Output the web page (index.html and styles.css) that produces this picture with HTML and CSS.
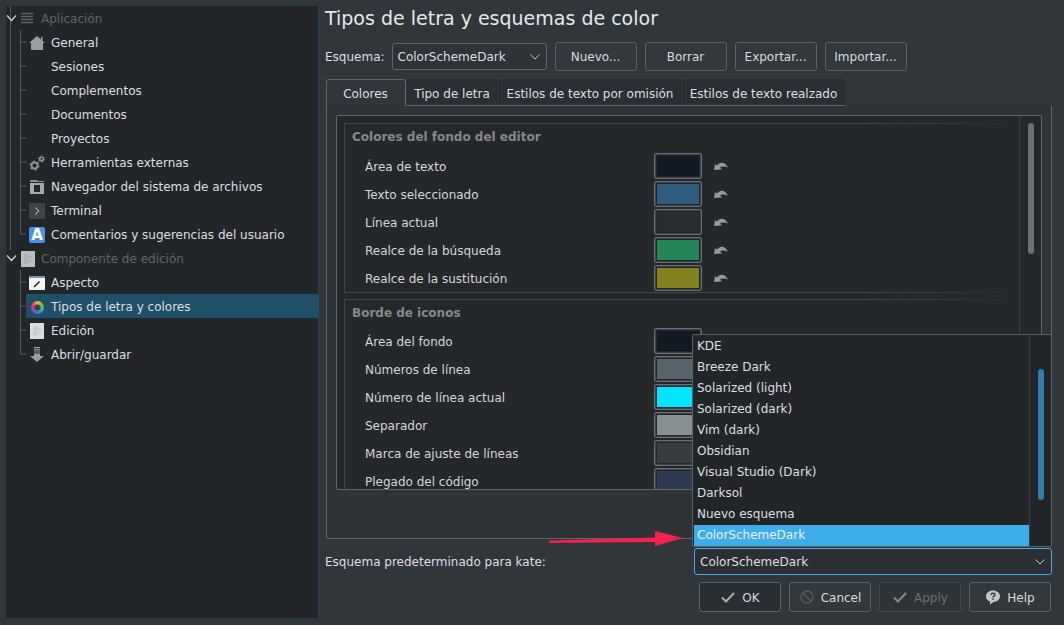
FILE: index.html
```html
<!DOCTYPE html>
<html lang="es-ES">
    <head>
        <meta charset="UTF-8" />
        <meta name="viewport" content="width=device-width, initial-scale=1.0" />
        <title>Tipos de letra y esquemas de color</title>
        <link rel="stylesheet" href="styles.css">
    </head>
    <body>
        <div class="ventana">
            <!-- arbol lateral -->
            <nav class="arbol">
                <svg class="guias" width="40" height="360" viewBox="0 0 40 360">
                    <path d="M4.500 0V244M14.500 24V228H20M14.500 264V348H20M14.500 36H20M14.500 60H20M14.500 84H20M14.500 108H20M14.500 132H20M14.500 156H20M14.500 180H20M14.500 204H20M14.500 276H20M14.500 300H20M14.500 324H20" fill="none" stroke="#54585c"/>
                    <path d="M1 9.500l4.500 5 4.500-5M1 249.500l4.500 5 4.500-5" fill="none" stroke="#d5d7d8" stroke-width="1.200"/>
                </svg>
                <div class="fila seccion">
                    <svg class="iconoSeccion" width="14" height="14" viewBox="0 0 14 14"><path d="M0 1.500H12M0 4.500H12M0 7.500H12M0 10.500H12" stroke="#5d6165" stroke-width="1.500"/></svg>
                    <span>Aplicación</span>
                </div>
                <div class="fila">
                    <svg class="icono" viewBox="0 0 16 16"><path d="M8 1L12 4.500V2H13.500V6L16 8H14V15H2V8H0Z" fill="#9a9ea4"/></svg>
                    <span>General</span>
                </div>
                <div class="fila"><span class="icono"></span><span>Sesiones</span></div>
                <div class="fila"><span class="icono"></span><span>Complementos</span></div>
                <div class="fila"><span class="icono"></span><span>Documentos</span></div>
                <div class="fila"><span class="icono"></span><span>Proyectos</span></div>
                <div class="fila">
                    <svg class="icono" viewBox="0 0 16 16">
                        <circle cx="5.500" cy="10.500" r="3" fill="none" stroke="#8d9195" stroke-width="2"/>
                        <circle cx="5.500" cy="10.500" r="4.300" fill="none" stroke="#8d9195" stroke-width="1.400" stroke-dasharray="2 2.500"/>
                        <circle cx="12.500" cy="4" r="1.800" fill="none" stroke="#8d9195" stroke-width="1.600"/>
                        <circle cx="12.500" cy="4" r="3" fill="none" stroke="#8d9195" stroke-width="1" stroke-dasharray="1.500 1.650"/>
                    </svg>
                    <span>Herramientas externas</span>
                </div>
                <div class="fila">
                    <svg class="icono" viewBox="0 0 16 16"><path d="M1 1H8L9 2H15V3H1Z" fill="#8d9195"/><path d="M1 4H15V15H1ZM5 6V13H11V6Z" fill="#a5a9ad" fill-rule="evenodd"/></svg>
                    <span>Navegador del sistema de archivos</span>
                </div>
                <div class="fila">
                    <svg class="icono" viewBox="0 0 16 16"><rect width="16" height="16" rx="1" fill="#3d4346"/><path d="M6 4.500L10 8L6 11.500" fill="none" stroke="#c6c9cb"/></svg>
                    <span>Terminal</span>
                </div>
                <div class="fila">
                    <span class="icono letraA">A</span>
                    <span>Comentarios y sugerencias del usuario</span>
                </div>
                <div class="fila seccion">
                    <svg class="iconoSeccion documento apagado" width="14" height="16" viewBox="0 0 14 16"><rect width="14" height="16" fill="#d9d9d9"/><path d="M3 4H8M3 6H11M3 8H9M3 10H11M3 12H7" stroke="#bcbcbc"/></svg>
                    <span>Componente de edición</span>
                </div>
                <div class="fila">
                    <svg class="icono" viewBox="0 0 16 16"><rect y="1" width="16" height="14" fill="#f4f4f4"/><rect y="1" width="16" height="2" fill="#7f98ad"/><path d="M5 12L10.500 6.500" stroke="#2a2a2a" stroke-width="1.600"/></svg>
                    <span>Aspecto</span>
                </div>
                <div class="fila activa">
                    <span class="icono rueda"></span>
                    <span>Tipos de letra y colores</span>
                </div>
                <div class="fila">
                    <svg class="icono" viewBox="0 0 16 16"><rect x="1" width="14" height="16" fill="#dcdcdc"/><path d="M4 4H9M4 6H12M4 8H10M4 10H12M4 12H8" stroke="#bdbdbd"/></svg>
                    <span>Edición</span>
                </div>
                <div class="fila">
                    <svg class="icono" viewBox="0 0 16 16"><path d="M5 0H11V1.200H5ZM5 2.200H11V3.400H5ZM5 4.400H11V5.600H5ZM5 6.600H11V9H15L8 15L1 9H5Z" fill="#9a9ea4"/></svg>
                    <span>Abrir/guardar</span>
                </div>
            </nav>

            <main class="principal">
                <h1>Tipos de letra y esquemas de color</h1>

                <div class="zonaEsquema">
                    <label>Esquema:</label>
                    <div class="combo comboEsquema">
                        <span>ColorSchemeDark</span>
                        <svg width="10" height="6" viewBox="0 0 10 6"><path d="M.5.500L5 5L9.500.500" fill="none" stroke="#c5c7c9"/></svg>
                    </div>
                    <button class="boton">Nuevo...</button>
                    <button class="boton">Borrar</button>
                    <button class="boton">Exportar...</button>
                    <button class="boton">Importar...</button>
                </div>

                <div class="pestanas">
                    <div class="pestana activa">Colores</div>
                    <div class="pestana letra">Tipo de letra</div>
                    <div class="pestana omision">Estilos de texto por omisión</div>
                    <div class="pestana realzado">Estilos de texto realzado</div>
                </div>

                <div class="panel">
                    <div class="areaScroll">
                        <div class="contenido">
                            <section class="grupo">
                                <h2>Colores del fondo del editor</h2>
                                <div class="color"><span>Área de texto</span><i class="muestra c1"></i><svg class="deshacer" viewBox="0 0 14 8"><path d="M0 8L1 2L3 3.500C6 -.5 11 -.5 14 5.500C11 4 8 4 6 5.500L8 7.500Z" fill="#96999c"/></svg></div>
                                <div class="color"><span>Texto seleccionado</span><i class="muestra c2"></i><svg class="deshacer" viewBox="0 0 14 8"><path d="M0 8L1 2L3 3.500C6 -.5 11 -.5 14 5.500C11 4 8 4 6 5.500L8 7.500Z" fill="#96999c"/></svg></div>
                                <div class="color"><span>Línea actual</span><i class="muestra c3"></i><svg class="deshacer" viewBox="0 0 14 8"><path d="M0 8L1 2L3 3.500C6 -.5 11 -.5 14 5.500C11 4 8 4 6 5.500L8 7.500Z" fill="#96999c"/></svg></div>
                                <div class="color"><span>Realce de la búsqueda</span><i class="muestra c4"></i><svg class="deshacer" viewBox="0 0 14 8"><path d="M0 8L1 2L3 3.500C6 -.5 11 -.5 14 5.500C11 4 8 4 6 5.500L8 7.500Z" fill="#96999c"/></svg></div>
                                <div class="color"><span>Realce de la sustitución</span><i class="muestra c5"></i><svg class="deshacer" viewBox="0 0 14 8"><path d="M0 8L1 2L3 3.500C6 -.5 11 -.5 14 5.500C11 4 8 4 6 5.500L8 7.500Z" fill="#96999c"/></svg></div>
                            </section>
                            <section class="grupo">
                                <h2>Borde de iconos</h2>
                                <div class="color"><span>Área del fondo</span><i class="muestra c1"></i></div>
                                <div class="color"><span>Números de línea</span><i class="muestra c6"></i></div>
                                <div class="color"><span>Número de línea actual</span><i class="muestra c7"></i></div>
                                <div class="color"><span>Separador</span><i class="muestra c8"></i></div>
                                <div class="color"><span>Marca de ajuste de líneas</span><i class="muestra c9"></i></div>
                                <div class="color"><span>Plegado del código</span><i class="muestra c10"></i></div>
                            </section>
                        </div>
                        <div class="barra"><div class="pulgar"></div></div>
                    </div>
                </div>

                <div class="zonaDefecto">
                    <label>Esquema predeterminado para kate:</label>
                    <div class="combo comboDefecto">
                        <span>ColorSchemeDark</span>
                        <svg width="10" height="6" viewBox="0 0 10 6"><path d="M.5.500L5 5L9.500.500" fill="none" stroke="#c5c7c9"/></svg>
                    </div>
                </div>

                <div class="zonaBotones">
                    <button class="boton accion ok">
                        <svg width="16" height="16" viewBox="0 0 16 16"><path d="M2 8.500L6 12.500L14 4" fill="none" stroke="#a9acae" stroke-width="2"/></svg>OK
                    </button>
                    <button class="boton accion">
                        <svg width="16" height="16" viewBox="0 0 16 16"><circle cx="8" cy="8" r="6" fill="none" stroke="#575b5f" stroke-width="1.300"/><path d="M4 4L12 12" stroke="#575b5f" stroke-width="1.300"/></svg>Cancel
                    </button>
                    <button class="boton accion apagado">
                        <svg width="16" height="16" viewBox="0 0 16 16"><path d="M2 8.500L6 12.500L14 4" fill="none" stroke="#85888b" stroke-width="2"/></svg>Apply
                    </button>
                    <button class="boton accion">
                        <svg width="16" height="16" viewBox="0 0 16 16"><path d="M8 1.500C12 1.500 15 4 15 7.300S12 13 8.500 13L5 15.500V12.500C2.500 11.700 1 9.800 1 7.300C1 4 4 1.500 8 1.500Z" fill="#c3c5c7"/><path d="M6 5.800C6.300 3.800 10 3.800 10 5.800C10 7.300 8 7 8 8.500M8 9.500V11" fill="none" stroke="#31363b" stroke-width="1.400"/></svg>Help
                    </button>
                </div>
            </main>

            <!-- lista desplegada del combo -->
            <div class="desplegable">
                <ul class="lista">
                    <li>KDE</li>
                    <li>Breeze Dark</li>
                    <li>Solarized (light)</li>
                    <li>Solarized (dark)</li>
                    <li>Vim (dark)</li>
                    <li>Obsidian</li>
                    <li>Visual Studio (Dark)</li>
                    <li>Darksol</li>
                    <li>Nuevo esquema</li>
                    <li class="elegido">ColorSchemeDark</li>
                </ul>
                <div class="barraLista"><div class="pulgarLista"></div></div>
            </div>

            <svg class="flecha" width="140" height="20" viewBox="0 0 140 20">
                <path d="M0 10.500L106 7.500V12L0 13Z" fill="#f5214e"/>
                <path d="M106 1L134 8L106 16Z" fill="#f5214e"/>
            </svg>
        </div>
    </body>
</html>
```

FILE: styles.css
```css
*{
    margin: 0;
    padding: 0;
    box-sizing: border-box;
}
body{
    background-color: #31363b;
    color: #dcdee0;
    font-family: "DejaVu Sans", sans-serif;
    font-size: 12px;
    overflow: hidden;
}
.ventana{
    position: relative;
    display: flex;
    width: 1064px;
    height: 625px;
    padding: 6px 12px 0 6px;
}

/* arbol */
.arbol{
    position: relative;
    width: 313px;
    height: 612px;
    background-color: #232629;
    border-right: 1px solid #1d4a60;
}
.guias{
    position: absolute;
    top: 0;
    left: 0;
}
.fila{
    position: relative;
    display: flex;
    align-items: center;
    height: 24px;
    margin-left: 20px;
    padding: 2px 0 0 3px;
    gap: 6px;
}
.fila.seccion{
    margin-left: 0;
    padding-left: 15px;
    color: #5f6367;
    gap: 6px;
}
.fila.activa{
    background-color: #205067;
}
.icono{
    display: block;
    width: 16px;
    height: 16px;
    flex: none;
}
.iconoSeccion{
    flex: none;
    width: 14px;
}
.documento{
    opacity: .85;
}
.letraA{
    background-color: #4a90e6;
    border-radius: 2px;
    color: #fff;
    font-weight: bold;
    font-size: 15px;
    line-height: 16px;
    text-align: center;
}
.icono.rueda{
    width: 13px;
    height: 13px;
    margin: 0 1px 0 2px;
    border-radius: 50%;
    background: radial-gradient(circle, #3a3f42 0 2.500px, transparent 3.500px), conic-gradient(#e8b33c, #7ac142, #27b5a8, #3a78d8, #a040c0, #e0405a, #e8b33c);
}

/* parte derecha */
.principal{
    flex: 1;
    min-width: 0;
    margin-left: 6px;
}
h1{
    height: 24px;
    font-size: 19px;
    font-weight: normal;
    line-height: 24px;
    color: #e6e8e9;
}
.zonaEsquema{
    display: flex;
    align-items: center;
    height: 29px;
    margin-top: 12px;
    gap: 8px;
}
.combo{
    display: flex;
    align-items: center;
    justify-content: space-between;
    height: 27px;
    background-color: #2f3337;
    border: 1px solid #61666a;
    border-radius: 3px;
}
.comboEsquema{
    width: 155px;
    margin-left: -1px;
    padding: 0 6px 0 5px;
}
.boton{
    width: 82px;
    height: 29px;
    background-color: #33383c;
    border: 1px solid #5c6165;
    border-radius: 3px;
    color: #d8dadc;
    font-family: inherit;
    font-size: 12px;
}
.pestanas{
    display: flex;
    height: 27px;
    margin-top: 8px;
    margin-left: 1px;
}
.pestana{
    display: flex;
    align-items: center;
    justify-content: center;
    padding: 3px 1px 0 0;
    background-color: #2b2f33;
    border-bottom: 1px solid #61666a;
    border-left: 1px solid #31363b;
}
.pestana.activa{
    width: 80px;
    padding-top: 1px;
    background-color: #31363b;
    border: 1px solid #61666a;
    border-bottom: none;
    border-radius: 3px 3px 0 0;
}
.pestana.letra{ width: 92px; }
.pestana.omision{ width: 184px; }
.pestana.realzado{ width: 163px; }
.panel{
    width: 726px;
    height: 433px;
    margin-left: 1px;
    padding: 9px;
    background-color: #2f3337;
    border: 1px solid #61666a;
    border-top: none;
    border-radius: 0 0 3px 3px;
}
.areaScroll{
    display: flex;
    height: 375px;
    background-color: #25282b;
    border: 1px solid #61666a;
    border-radius: 2px;
    overflow: hidden;
}
.contenido{
    flex: 1;
    min-width: 0;
    padding: 7px 0 0 7px;
    color: #d4d6d7;
}
.grupo{
    margin-bottom: 6px;
    padding-left: 20px;
    border: 1px solid transparent;
    border-image: linear-gradient(to right, #43484c 75%, transparent) 1;
}
.grupo h2{
    height: 22px;
    margin-left: -13px;
    margin-bottom: 6px;
    font-size: 12px;
    line-height: 26px;
    color: #85888b;
}
.grupo + .grupo h2{
    margin-bottom: 5px;
}
.color{
    display: flex;
    align-items: center;
    height: 28px;
}
.color span{
    width: 289px;
    padding-top: 2px;
}
.muestra{
    display: block;
    width: 48px;
    height: 26px;
    padding: 2px;
    background-clip: content-box;
    border: 1px solid #6a6f73;
    border-radius: 2px;
    box-shadow: inset 0 0 0 1px #3c4044;
}
.c1{ background-color: #141a23; }
.c2{ background-color: #2d5c7f; }
.c3{ background-color: #2a2c30; }
.c4{ background-color: #248558; }
.c5{ background-color: #82811f; }
.c6{ background-color: #56636a; }
.c7{ background-color: #00e5ff; }
.c8{ background-color: #87908f; }
.c9{ background-color: #383c3f; }
.c10{ background-color: #2e3a4d; }
.deshacer{
    width: 14px;
    height: 8px;
    margin-left: 12px;
}
.barra{
    width: 22px;
    flex: none;
    padding: 7px 0 0 8px;
    border-left: 1px solid #3a3e42;
}
.pulgar{
    width: 6px;
    height: 131px;
    background-color: #6d7073;
    border-radius: 3px;
}
.zonaDefecto{
    display: flex;
    align-items: center;
    justify-content: space-between;
    height: 27px;
    margin-top: 9px;
}
.comboDefecto{
    width: 358px;
    padding: 0 6px 0 5px;
    border-color: #3daee9;
    background-color: #2b2f33;
}
.zonaBotones{
    display: flex;
    justify-content: flex-end;
    gap: 8px;
    margin-top: 7px;
    padding-right: 1px;
}
.accion{
    display: flex;
    align-items: center;
    justify-content: center;
    gap: 6px;
    height: 30px;
    padding-top: 2px;
}
.accion svg{
    margin-top: -2px;
}
.accion.ok{
    background-color: #2a2e32;
}
.accion.apagado{
    background-color: #2f3337;
    border-color: #44484c;
    color: #6a6e72;
}

/* desplegable */
.desplegable{
    position: absolute;
    top: 334px;
    left: 692px;
    display: flex;
    width: 360px;
    height: 213px;
    padding: 1px;
    background-color: #232629;
    border: 1px solid #5b6064;
    border-radius: 2px;
}
.lista{
    width: 335px;
    list-style: none;
}
.lista li{
    height: 21px;
    padding-left: 3px;
    line-height: 21px;
}
.lista li.elegido{
    background-color: #3daee9;
    color: #eff0f1;
}
.barraLista{
    flex: 1;
    padding: 33px 0 0 8px;
    border-left: 1px solid #3a3e42;
}
.pulgarLista{
    width: 6px;
    height: 131px;
    background-color: #2d7eab;
    border-radius: 3px;
}
.flecha{
    position: absolute;
    top: 530px;
    left: 549px;
}
```
